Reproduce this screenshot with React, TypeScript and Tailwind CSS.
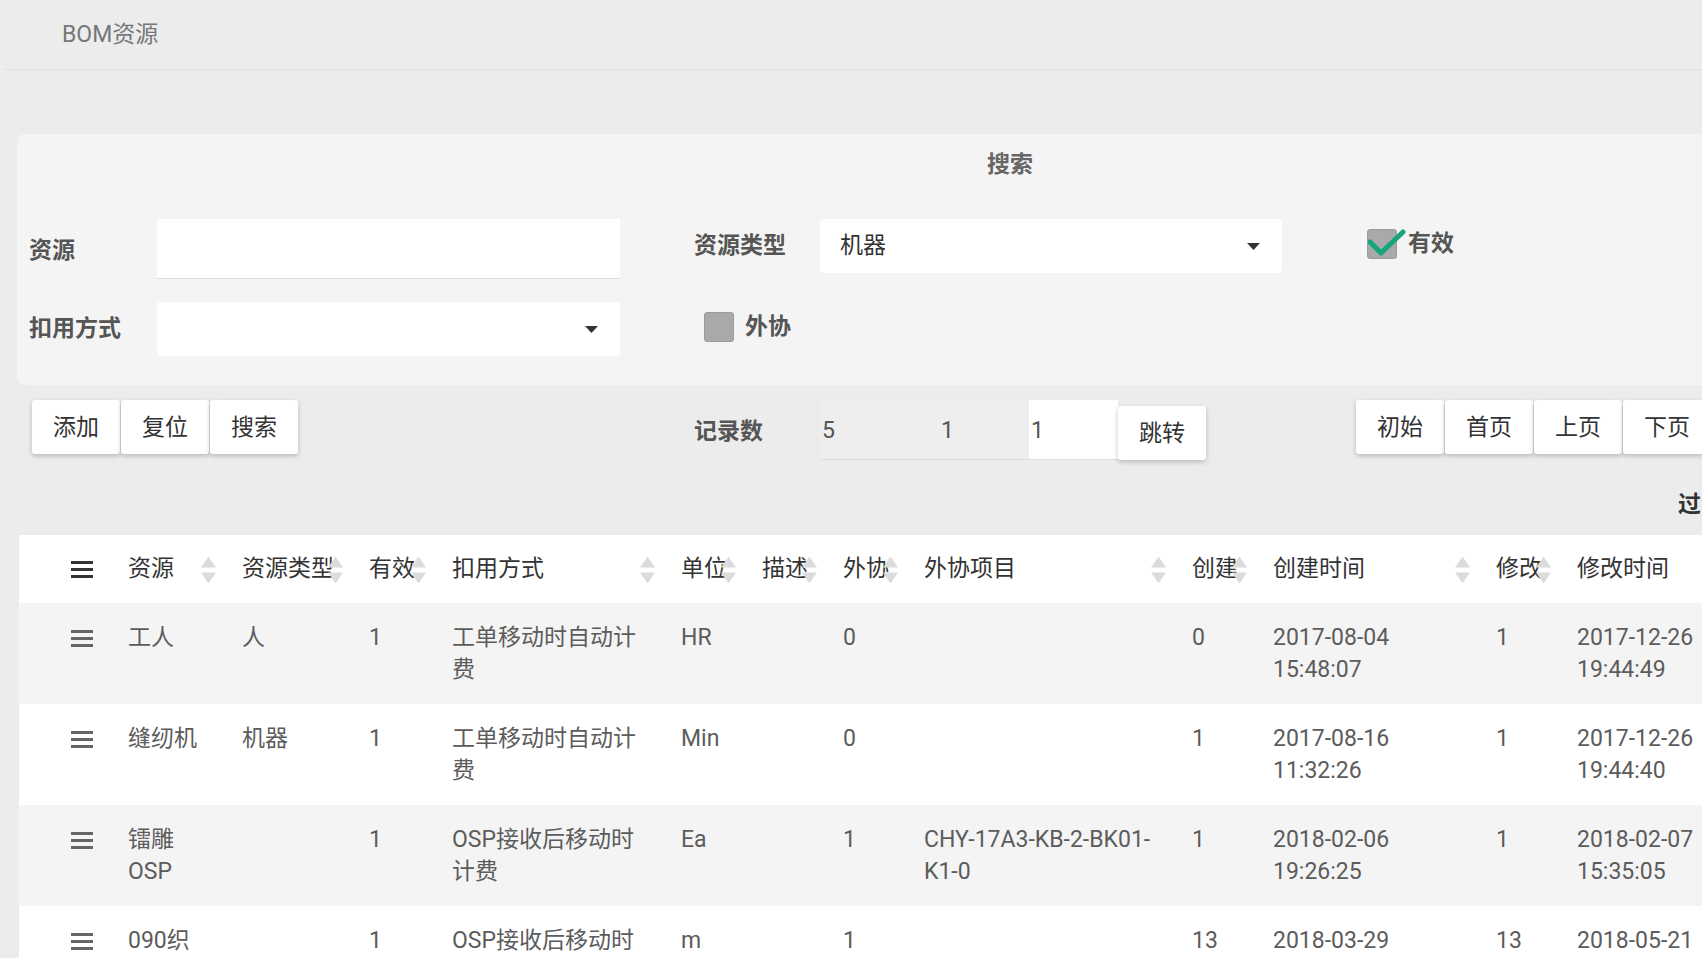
import React from 'react';

const gridCols =
  'grid grid-cols-[109px_114px_127px_83px_229px_81px_81px_81px_268px_81px_223px_81px_220px]';

const headers = ['', '资源', '资源类型', '有效', '扣用方式', '单位', '描述', '外协', '外协项目', '创建', '创建时间', '修改', '修改时间'];

type Row = string[][];

const rows: Row[] = [
  [['工人'], ['人'], ['1'], ['工单移动时自动计', '费'], ['HR'], [], ['0'], [], ['0'], ['2017-08-04', '15:48:07'], ['1'], ['2017-12-26', '19:44:49']],
  [['缝纫机'], ['机器'], ['1'], ['工单移动时自动计', '费'], ['Min'], [], ['0'], [], ['1'], ['2017-08-16', '11:32:26'], ['1'], ['2017-12-26', '19:44:40']],
  [['镭雕', 'OSP'], [], ['1'], ['OSP接收后移动时', '计费'], ['Ea'], [], ['1'], ['CHY-17A3-KB-2-BK01-', 'K1-0'], ['1'], ['2018-02-06', '19:26:25'], ['1'], ['2018-02-07', '15:35:05']],
  [['090织'], [], ['1'], ['OSP接收后移动时', '计费'], ['m'], [], ['1'], [], ['13'], ['2018-03-29', '09:18:42'], ['13'], ['2018-05-21', '14:06:31']],
];

const Bars = ({ className }: { className?: string }) => (
  <svg width="22" height="17" viewBox="0 0 22 17" className={className} fill="currentColor">
    <rect x="0" y="0" width="22" height="3" />
    <rect x="0" y="7" width="22" height="3" />
    <rect x="0" y="14" width="22" height="3" />
  </svg>
);

const SortIcon = () => (
  <svg width="15" height="27" viewBox="0 0 15 27" fill="#dcdcdc" className="absolute right-[26px] top-1/2 -translate-y-1/2">
    <path d="M7.5 0L15 11H0z" />
    <path d="M0 16h15L7.5 27z" />
  </svg>
);

const Caret = () => (
  <svg width="13" height="7" viewBox="0 0 13 7" fill="#333">
    <path d="M0 0h13L6.5 7z" />
  </svg>
);

const Checkbox = ({ checked, label }: { checked?: boolean; label: string }) => (
  <div className="flex items-center gap-[11px]">
    <div className="relative w-[30px] h-[30px] rounded-[3px] bg-[#a9a9a9] border border-[#9c9c9c]">
      {checked && (
        <svg width="40" height="30" viewBox="0 0 40 30" className="absolute left-[0px] top-[-1px]" fill="none">
          <path d="M2 13L13 24L35 3" stroke="#17a57b" strokeWidth="5" strokeLinecap="round" strokeLinejoin="round" />
        </svg>
      )}
    </div>
    <span className="font-bold text-[#555]">{label}</span>
  </div>
);

const Btn = ({ children, className = '' }: { children: React.ReactNode; className?: string }) => (
  <button className={`w-[88px] h-[54px] pt-[3px] bg-white rounded-[3px] text-[#333] shadow-[0_2px_5px_rgba(0,0,0,0.22)] ${className}`}>
    {children}
  </button>
);

export default function App() {
  return (
    <div className="w-[1702px] h-[958px] overflow-hidden bg-[#ececec] font-['Roboto','Noto_Sans_CJK_SC',sans-serif] text-[23px]">
      <div className="w-[2020px]">
        {/* title bar */}
        <div className="ml-[4px] h-[70px] border-b border-[#e0e0e0] flex items-center pl-[58px] pt-[2px] text-[#777]">
          BOM资源
        </div>

        {/* search panel */}
        <div className="mt-[64px] ml-[17px] w-[1986px] rounded-[8px] bg-[#f4f4f4] pt-[15px] pb-[29px]">
          <div className="text-center leading-[32px] font-bold text-[#666]">搜索</div>

          <div className="mt-[38px] pl-[12px] flex items-start">
            <div className="w-[128px] h-[60px] pt-[5px] flex items-center font-bold text-[#555]">资源</div>
            <div className="w-[463px] h-[60px] bg-white border-b border-[#dcdcdc]" />
            <div className="ml-[74px] w-[126px] h-[54px] flex items-center font-bold text-[#555]">资源类型</div>
            <div className="w-[462px] h-[54px] bg-white rounded-[4px] flex items-center justify-between pl-[20px] pr-[22px] text-[#333]">
              <span>机器</span>
              <Caret />
            </div>
            <div className="ml-[85px] mt-[8px]">
              <Checkbox checked label="有效" />
            </div>
          </div>

          <div className="mt-[23px] pl-[12px] flex items-center">
            <div className="w-[128px] h-[54px] flex items-center font-bold text-[#555]">扣用方式</div>
            <div className="w-[463px] h-[54px] bg-white rounded-[4px] flex items-center justify-end pr-[22px]">
              <Caret />
            </div>
            <div className="ml-[84px] mb-[4px]">
              <Checkbox label="外协" />
            </div>
          </div>
        </div>

        {/* toolbar */}
        <div className="mt-[15px] flex items-start">
          <div className="ml-[32px] flex gap-[1px]">
            <Btn>添加</Btn>
            <Btn>复位</Btn>
            <Btn>搜索</Btn>
          </div>
          <div className="ml-[396px] w-[127px] h-[60px] pt-[4px] flex items-center font-bold text-[#555]">记录数</div>
          <div className="flex h-[60px] text-[#555]">
            <div className="w-[104px] h-full flex items-center pt-[4px] pl-[1px] bg-[#eeeeee] border-b border-[#dddddd]">5</div>
            <div className="w-[104px] h-full flex items-center pt-[4px] pl-[16px] bg-[#eeeeee] border-b border-[#dddddd]">1</div>
            <div className="w-[89px] h-full flex items-center pt-[4px] pl-[2px] bg-white border-b border-[#dddddd]">1</div>
          </div>
          <Btn className="mt-[6px]">跳转</Btn>
          <div className="ml-[150px] flex gap-[1px]">
            <Btn>初始</Btn>
            <Btn>首页</Btn>
            <Btn>上页</Btn>
            <Btn>下页</Btn>
            <Btn>末页</Btn>
          </div>
        </div>

        <div className="mt-[29px] ml-[1678px] leading-[32px] font-bold text-[#333]">过滤:</div>

        {/* table */}
        <div className="mt-[14px] ml-[19px] w-fit">
          <div className={`${gridCols} h-[68px] pt-[1px] bg-white text-[#333]`}>
            {headers.map((h, i) => (
              <div key={i} className="relative flex items-center">
                {i === 0 ? (
                  <Bars className="ml-[52px] text-[#333]" />
                ) : (
                  <>
                    <span className="whitespace-nowrap">{h}</span>
                    <SortIcon />
                  </>
                )}
              </div>
            ))}
          </div>
          {rows.map((r, ri) => (
            <div
              key={ri}
              className={`${gridCols} h-[101px] pt-[19px] leading-[32px] text-[#5c5c5c] ${ri % 2 === 0 ? 'bg-[#f4f4f4]' : 'bg-white'}`}
            >
              <div className="h-[32px] flex items-center">
                <Bars className="ml-[52px] text-[#666]" />
              </div>
              {r.map((cell, ci) => (
                <div key={ci} className="whitespace-nowrap">
                  {cell.map((line, li) => (
                    <div key={li}>{line}</div>
                  ))}
                </div>
              ))}
            </div>
          ))}
        </div>
      </div>
    </div>
  );
}
